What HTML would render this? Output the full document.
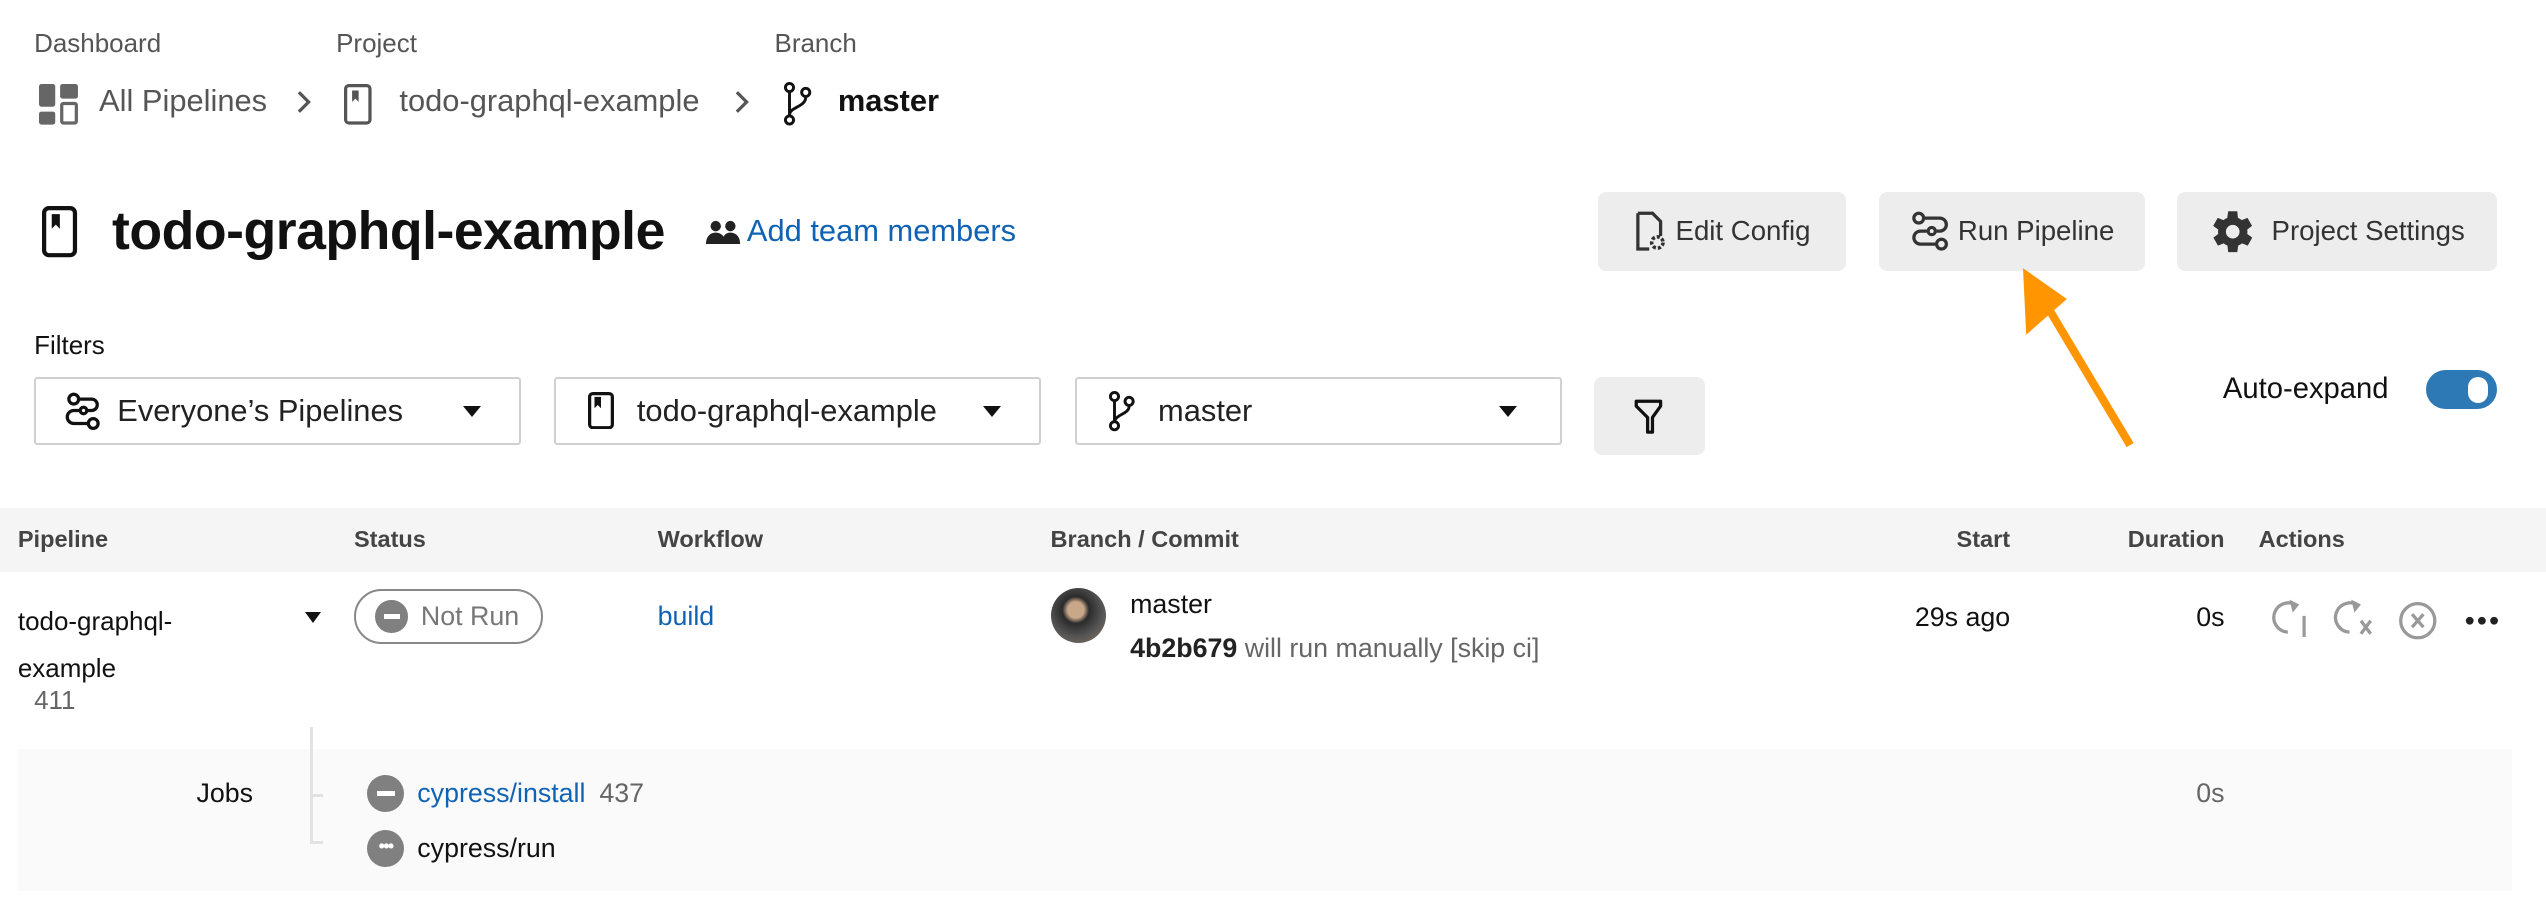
<!DOCTYPE html>
<html><head><meta charset="utf-8"><style>
html,body{margin:0;padding:0;background:#fff;overflow:hidden}
body{width:2546px;height:916px}
#w{zoom:1.62372;width:1568px;height:564px;position:relative;font-family:"Liberation Sans",sans-serif;color:#161616}
.a{position:absolute;white-space:nowrap}
.btn{position:absolute;background:#ededed;border-radius:5px;height:49px;top:118px;display:flex;align-items:center;justify-content:center;font-size:17px;color:#333;gap:4px}
.dd{position:absolute;top:232px;height:42px;border:1.5px solid #d0d0d0;border-radius:2px;box-sizing:border-box;display:flex;align-items:center;font-size:19px;color:#222}
.hd{position:absolute;top:324px;font-size:14.5px;font-weight:bold;color:#444}
.car{position:absolute;width:0;height:0;border-left:6px solid transparent;border-right:6px solid transparent;border-top:7px solid #111}
</style></head><body><div id="w">
<div class="a" style="left:21px;top:17px;font-size:16px;color:#555">Dashboard</div>
<div class="a" style="left:207px;top:17px;font-size:16px;color:#555">Project</div>
<div class="a" style="left:477px;top:17px;font-size:16px;color:#555">Branch</div>
<svg class="a" style="left:24px;top:52px" width="25" height="25" viewBox="0 0 25 25" fill="#666"><rect x="0" y="0" width="10" height="14" rx="1.5"/><rect x="13" y="0" width="11" height="9" rx="1.5"/><rect x="0" y="17" width="10" height="8" rx="1.5"/><rect x="14" y="12" width="9" height="12" rx="1" fill="none" stroke="#666" stroke-width="2"/></svg>
<div class="a" style="left:61px;top:51px;font-size:19px;color:#555">All Pipelines</div>
<svg class="a" style="left:181px;top:55px" width="12" height="16"><path d="M3 2l6 6-6 6" stroke="#555" stroke-width="2" fill="none"/></svg>
<svg class="a" style="left:212px;top:52px" width="18" height="26"><rect x="1" y="1" width="15" height="23" rx="2" fill="none" stroke="#555" stroke-width="2"/><path d="M5 4h4v7l-2-2-2 2z" fill="#555"/></svg>
<div class="a" style="left:246px;top:51px;font-size:19px;color:#555">todo-graphql-example</div>
<svg class="a" style="left:451px;top:55px" width="12" height="16"><path d="M3 2l6 6-6 6" stroke="#555" stroke-width="2" fill="none"/></svg>
<svg class="a" style="left:482px;top:50px" width="20" height="28"><circle cx="4" cy="4" r="2.5" fill="none" stroke="#111" stroke-width="1.8"/><circle cx="4" cy="24" r="2.5" fill="none" stroke="#111" stroke-width="1.8"/><circle cx="14" cy="7" r="2.5" fill="none" stroke="#111" stroke-width="1.8"/><path d="M4 7v14M14 10c0 6-10 6-10 11" stroke="#111" stroke-width="1.8" fill="none"/></svg>
<div class="a" style="left:516px;top:51px;font-size:19px;font-weight:bold;color:#111">master</div>

<svg class="a" style="left:26px;top:127px" width="22" height="32"><rect x="1.3" y="1.3" width="19" height="29" rx="3" fill="none" stroke="#111" stroke-width="2.6"/><path d="M6 5h5v9l-2.5-2.5L6 14z" fill="#111"/></svg>
<div class="a" style="left:69px;top:123px;font-size:33px;font-weight:bold;color:#111;letter-spacing:-0.3px">todo-graphql-example</div>
<svg class="a" style="left:435px;top:134px" width="22" height="18" fill="#222"><circle cx="6" cy="5" r="3.2"/><circle cx="15" cy="5" r="3.2"/><path d="M0 16c0-5 3-7 6-7s6 2 6 7z"/><path d="M10 16c0-5 2-7 5-7s6 2 6 7z"/></svg>
<div class="a" style="left:460px;top:131px;font-size:19px;color:#0f62b4">Add team members</div>

<div class="btn" style="left:984px;width:153px"><svg width="22" height="26"><path d="M3 2h9l5 5v9M3 2v22h7" fill="none" stroke="#333" stroke-width="2"/><circle cx="15" cy="20" r="3.5" fill="none" stroke="#333" stroke-width="2.2" stroke-dasharray="2 1.2"/></svg>Edit Config</div>
<div class="btn" style="left:1157px;width:164px"><svg width="26" height="26"><circle cx="6" cy="5" r="3" fill="none" stroke="#333" stroke-width="2"/><circle cx="20" cy="21" r="3" fill="none" stroke="#333" stroke-width="2"/><circle cx="14" cy="13" r="2.2" fill="none" stroke="#333" stroke-width="2"/><path d="M9 5h10a4 4 0 010 8h-2M11 13H7a4 4 0 000 8h10" fill="none" stroke="#333" stroke-width="2"/></svg>Run Pipeline</div>
<div class="btn" style="left:1341px;width:197px;gap:10px"><svg width="28" height="28" viewBox="3 2 20 20"><path fill="#333" d="M19.4 13a7.5 7.5 0 000-2l2.1-1.6-2-3.5-2.5 1a7 7 0 00-1.7-1L15 3h-4l-.4 2.9a7 7 0 00-1.7 1l-2.5-1-2 3.5L6.6 11a7.5 7.5 0 000 2l-2.1 1.6 2 3.5 2.5-1a7 7 0 001.7 1L11 21h4l.4-2.9a7 7 0 001.7-1l2.5 1 2-3.5zM13 15A3 3 0 1113 9a3 3 0 010 6z"/></svg>Project Settings</div>

<div class="a" style="left:21px;top:203px;font-size:16px;color:#111">Filters</div>
<div class="dd" style="left:21px;width:300px"><svg style="margin-left:17px" width="24" height="24"><circle cx="6" cy="5" r="3" fill="none" stroke="#111" stroke-width="2"/><circle cx="18" cy="20" r="3" fill="none" stroke="#111" stroke-width="2"/><circle cx="12" cy="12" r="2" fill="none" stroke="#111" stroke-width="2"/><path d="M9 5h8a3.5 3.5 0 010 7h-3M10 12H6a3.5 3.5 0 000 8h9" fill="none" stroke="#111" stroke-width="2"/></svg><span style="margin-left:9px">Everyone’s Pipelines</span><div class="car" style="left:263px;top:17px"></div></div>
<div class="dd" style="left:341px;width:300px"><svg style="margin-left:20px" width="16" height="23"><rect x="1" y="1" width="14" height="21" rx="2" fill="none" stroke="#111" stroke-width="2"/><path d="M4 3h4v7l-2-2-2 2z" fill="#111"/></svg><span style="margin-left:14px">todo-graphql-example</span><div class="car" style="left:263px;top:17px"></div></div>
<div class="dd" style="left:662px;width:300px"><svg style="margin-left:19px" width="18" height="26"><circle cx="4" cy="4" r="2.5" fill="none" stroke="#111" stroke-width="1.8"/><circle cx="4" cy="22" r="2.5" fill="none" stroke="#111" stroke-width="1.8"/><circle cx="13" cy="7" r="2.5" fill="none" stroke="#111" stroke-width="1.8"/><path d="M4 7v12M13 10c0 5-9 5-9 10" stroke="#111" stroke-width="1.8" fill="none"/></svg><span style="margin-left:13px">master</span><div class="car" style="left:260px;top:17px"></div></div>
<div class="a" style="left:982px;top:232px;width:68px;height:48px;background:#ededed;border-radius:5px"><svg style="position:absolute;left:24px;top:13px" width="20" height="24"><path d="M2 2h15v3l-5 7v9h-3v-9L2 5z" fill="none" stroke="#111" stroke-width="2" stroke-linejoin="round"/></svg></div>
<div class="a" style="left:1369px;top:230px;font-size:18px;color:#111">Auto-expand</div>
<div class="a" style="left:1494px;top:228px;width:44px;height:24px;border-radius:12px;background:#2d79b5"><div style="position:absolute;right:6px;top:4px;width:12px;height:16px;border-radius:8px;background:#fff"></div></div>

<svg class="a" style="left:1230px;top:160px" width="100" height="120"><path d="M82 114L30 27" stroke="#ff9500" stroke-width="5"/><path d="M16 5L18 46L43 24z" fill="#ff9500"/></svg>

<div class="a" style="left:0;top:313px;width:1568px;height:39px;background:#f5f5f5"></div>
<div class="hd" style="left:11px">Pipeline</div>
<div class="hd" style="left:218px">Status</div>
<div class="hd" style="left:405px">Workflow</div>
<div class="hd" style="left:647px">Branch / Commit</div>
<div class="hd" style="left:1160px;width:78px;text-align:right">Start</div>
<div class="hd" style="left:1270px;width:100px;text-align:right">Duration</div>
<div class="hd" style="left:1391px">Actions</div>

<div class="a" style="left:11px;top:368px;font-size:16px;line-height:29px;color:#111">todo-graphql-<br>example</div>
<div class="a" style="left:21px;top:422px;font-size:16px;color:#666">411</div>
<div class="car" style="left:188px;top:377px;border-left-width:5px;border-right-width:5px;border-top-width:7px"></div>
<div class="a" style="left:218px;top:363px;width:114px;height:31px;border:1.5px solid #888;border-radius:17px;display:flex;align-items:center"><div style="margin-left:12px;width:20px;height:20px;border-radius:10px;background:#808080;position:relative"><div style="position:absolute;left:5px;top:8.5px;width:10px;height:3px;background:#fff"></div></div><span style="margin-left:8px;font-size:16.5px;color:#777">Not Run</span></div>
<div class="a" style="left:405px;top:370px;font-size:16.5px;color:#0f62b4">build</div>
<div class="a" style="left:647px;top:362px;width:34px;height:34px;border-radius:17px;background:radial-gradient(circle at 45% 40%,#c9a88a 0 18%,#2b2b2b 30%,#555 60%,#8a7a60 100%)"></div>
<div class="a" style="left:696px;top:363px;font-size:16.5px;color:#111">master</div>
<div class="a" style="left:696px;top:390px;font-size:16.5px;color:#666"><b style="color:#222;font-weight:bold">4b2b679</b> will run manually [skip ci]</div>
<div class="a" style="left:1140px;top:371px;width:98px;text-align:right;font-size:16.5px;color:#111">29s ago</div>
<div class="a" style="left:1300px;top:371px;width:70px;text-align:right;font-size:16.5px;color:#111">0s</div>
<svg class="a" style="left:1398px;top:368px" width="150" height="28" fill="none" stroke="#999" stroke-width="2"><path d="M17 5a9 9 0 10-6 16"/><path d="M12 1l6 3-4 5" fill="#999" stroke="none"/><path d="M21 11v13"/><path d="M55 5a9 9 0 10-6 16"/><path d="M50 1l6 3-4 5" fill="#999" stroke="none"/><path d="M56 14l6 8M62 14l-6 8"/><circle cx="91" cy="14" r="10.5"/><path d="M87.5 10l7 8M94.5 10l-7 8"/><circle cx="123" cy="14" r="2.4" fill="#222" stroke="none"/><circle cx="130.5" cy="14" r="2.4" fill="#222" stroke="none"/><circle cx="138" cy="14" r="2.4" fill="#222" stroke="none"/></svg>

<div class="a" style="left:11px;top:461px;width:1536px;height:88px;background:#fafafa"></div>
<div class="a" style="left:191px;top:448px;width:2px;height:72px;background:#e2e2e2"></div>
<div class="a" style="left:191px;top:518px;width:8px;height:2px;background:#e2e2e2"></div>
<div class="a" style="left:193px;top:489px;width:6px;height:2px;background:#e2e2e2"></div>
<div class="a" style="left:121px;top:479px;font-size:16.5px;color:#111">Jobs</div>
<div class="a" style="left:226px;top:477px;width:23px;height:23px;border-radius:12px;background:#808080"><div style="position:absolute;left:6px;top:10px;width:11px;height:3px;background:#fff"></div></div>
<div class="a" style="left:257px;top:479px;font-size:16.5px;color:#0f62b4">cypress/install <span style="color:#666;margin-left:4px">437</span></div>
<div class="a" style="left:1300px;top:479px;width:70px;text-align:right;font-size:16.5px;color:#666">0s</div>
<div class="a" style="left:226px;top:511px;width:23px;height:23px;border-radius:12px;background:#808080;color:#fff;font-size:11px;text-align:center;line-height:20px;font-weight:bold;letter-spacing:-1px">•••</div>
<div class="a" style="left:257px;top:513px;font-size:16.5px;color:#111">cypress/run</div>
</div></body></html>
